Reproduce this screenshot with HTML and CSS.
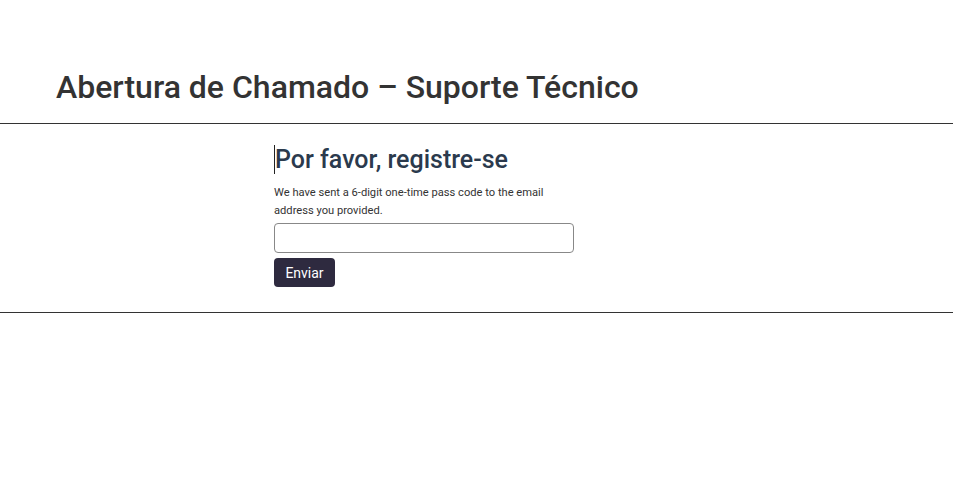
FILE: index.html
```html
<!DOCTYPE html>
<html lang="pt">
<head>
<meta charset="utf-8">
<title>Abertura de Chamado – Suporte Técnico</title>
<link rel="stylesheet" href="styles.css">
</head>
<body>
<header class="site-header">
  <h1 class="site-title">Abertura de Chamado – Suporte Técnico</h1>
</header>
<main class="content">
  <form class="otp-form">
    <h2 class="form-title"><span class="caret"></span>Por favor, registre-se</h2>
    <p class="form-text">We have sent a 6-digit one-time pass code to the email address you provided.</p>
    <input class="otp-input" type="text" aria-label="Código">
    <div class="actions"><button class="btn" type="button">Enviar</button></div>
  </form>
</main>
</body>
</html>
```
FILE: styles.css
```css
* { box-sizing: border-box; }
html, body { margin: 0; padding: 0; background: #fff; }
body { font-family: Roboto, "Noto Sans", "Liberation Sans", sans-serif; color: #333; }

.site-header {
  padding: 68px 56px 17px;
  border-bottom: 1px solid #333;
}
.site-title {
  margin: 0;
  font-size: 32px;
  line-height: 38px;
  font-weight: 500;
  color: #333;
}

.content {
  border-bottom: 1px solid #333;
  padding: 21px 0 25px 274px;
}
.otp-form {
  width: 300px;
  display: flex;
  flex-direction: column;
}
.form-title {
  margin: 0;
  font-size: 25px;
  line-height: 29px;
  font-weight: 500;
  color: #2b3a4d;
  display: flex;
  align-items: stretch;
}
.caret {
  width: 1px;
  background: #222;
}
.form-text {
  margin: 10px 0 3px;
  font-size: 11.15px;
  line-height: 18px;
  color: #333;
}
.otp-input {
  width: 300px;
  height: 30px;
  border: 1px solid #888;
  border-radius: 4px;
  padding: 4px 8px;
  font: inherit;
}
.actions { margin-top: 5px; }
.btn {
  background: #2e2a3f;
  color: #fff;
  border: 0;
  border-radius: 4px;
  height: 29px;
  width: 61px;
  font-family: inherit;
  font-size: 14px;
  padding: 0;
}
```
